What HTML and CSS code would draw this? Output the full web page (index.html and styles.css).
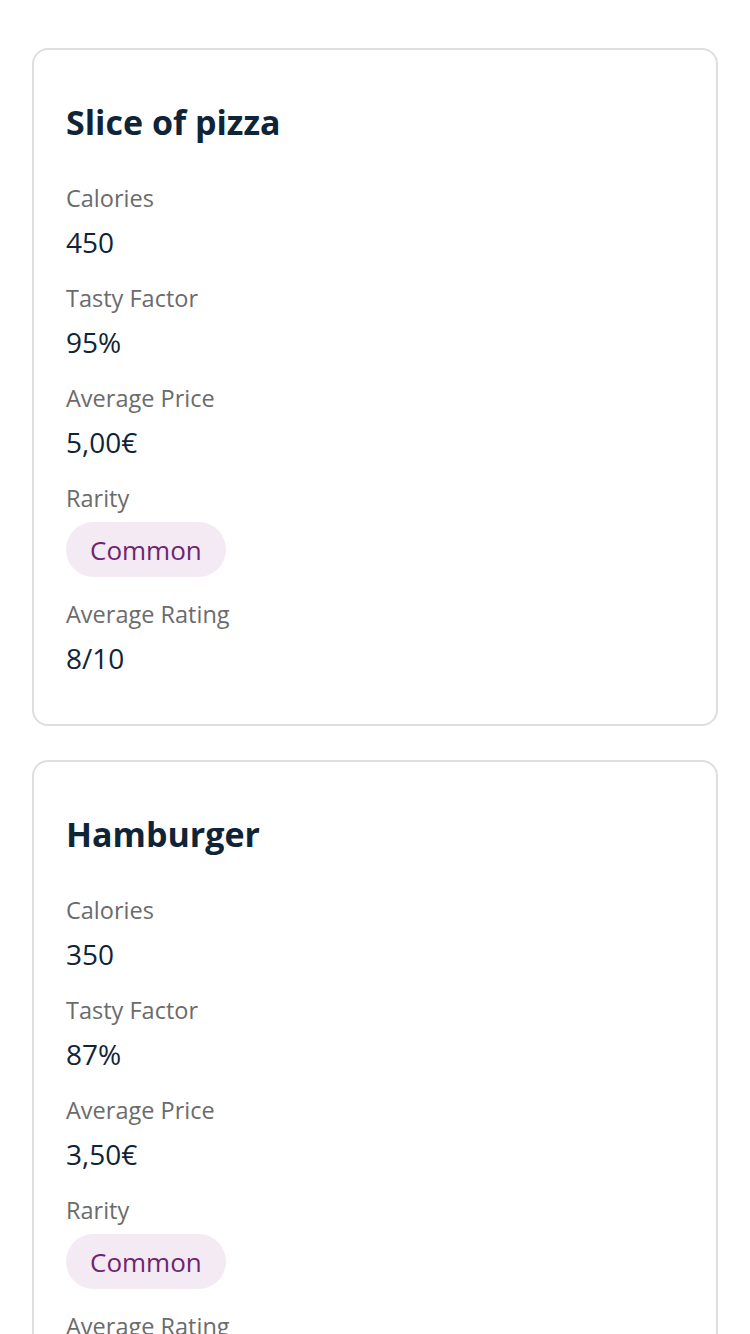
FILE: index.html
```html
<!DOCTYPE html>
<html lang="en">
<head>
<meta charset="utf-8">
<title>Food cards</title>
<link rel="stylesheet" href="styles.css">
</head>
<body>
<main class="page">
  <section class="card">
    <h2 class="card-title">Slice of pizza</h2>
    <dl class="facts">
      <dt class="label">Calories</dt>
      <dd class="value">450</dd>
      <dt class="label">Tasty Factor</dt>
      <dd class="value">95%</dd>
      <dt class="label">Average Price</dt>
      <dd class="value">5,00€</dd>
      <dt class="label">Rarity</dt>
      <dd class="value value-pill"><span class="pill">Common</span></dd>
      <dt class="label">Average Rating</dt>
      <dd class="value">8/10</dd>
    </dl>
  </section>
  <section class="card">
    <h2 class="card-title">Hamburger</h2>
    <dl class="facts">
      <dt class="label">Calories</dt>
      <dd class="value">350</dd>
      <dt class="label">Tasty Factor</dt>
      <dd class="value">87%</dd>
      <dt class="label">Average Price</dt>
      <dd class="value">3,50€</dd>
      <dt class="label">Rarity</dt>
      <dd class="value value-pill"><span class="pill">Common</span></dd>
      <dt class="label">Average Rating</dt>
      <dd class="value">7/10</dd>
    </dl>
  </section>
</main>
</body>
</html>
```
FILE: styles.css
```css
html, body {
  margin: 0;
  padding: 0;
  background: #ffffff;
}
body {
  font-family: "Open Sans", Lato, "Noto Sans", sans-serif;
  color: #0f2537;
}
.page {
  display: flex;
  flex-direction: column;
  gap: 34px;
  padding: 48px 32px;
}
.card {
  border: 2px solid #dedede;
  border-radius: 16px;
  padding: 50px 32px;
}
.card-title {
  margin: 0 0 38px;
  font-size: 34px;
  line-height: 44px;
  font-weight: 700;
  color: #0f2537;
}
.facts {
  margin: 0;
  display: flex;
  flex-direction: column;
}
.label {
  font-size: 23.5px;
  line-height: 32px;
  color: #6b6b6b;
  margin: 0 0 12px;
}
.value {
  margin: 0 0 24px;
  font-size: 28px;
  line-height: 32px;
  color: #0f2537;
}
.value:last-child {
  margin-bottom: 0;
}
.value-pill {
  margin-top: -4px;
  margin-bottom: 21px;
  display: flex;
}
.pill {
  display: inline-flex;
  align-items: center;
  height: 55px;
  padding: 0 24px;
  border-radius: 28px;
  background: #f4eaf4;
  color: #6e2670;
  font-size: 26px;
}
```
